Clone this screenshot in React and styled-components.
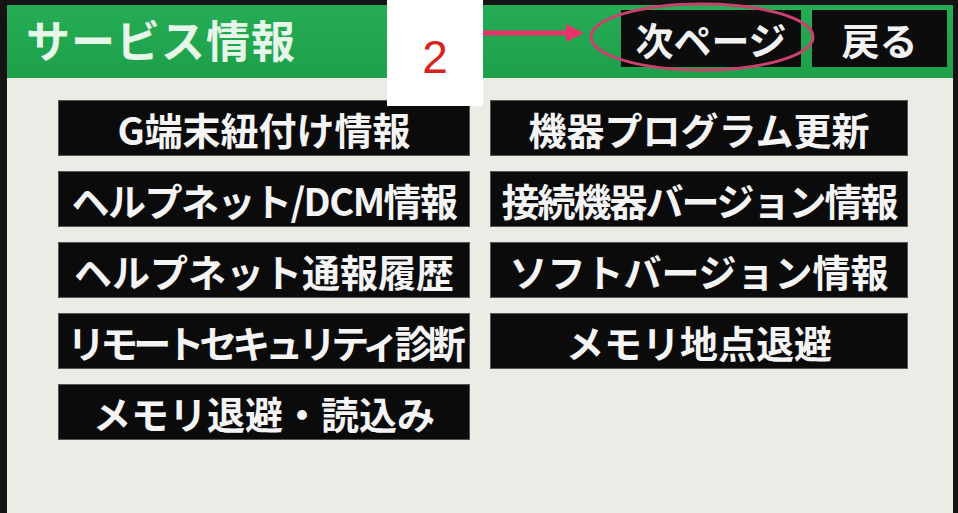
import React from 'react';
import styled, { createGlobalStyle } from 'styled-components';

const GlobalStyle = createGlobalStyle`
  html, body {
    margin: 0;
    padding: 0;
    background: #141414;
  }
  body {
    font-family: "Noto Sans CJK JP", "Noto Sans", sans-serif;
  }
`;

const Frame = styled.div`
  position: relative;
  width: 958px;
  height: 513px;
  padding: 5px 5px 0 7px;
  box-sizing: border-box;
  overflow: hidden;
  background: #141414;
`;

const Screen = styled.div`
  display: flex;
  flex-direction: column;
  height: 100%;
  background: #ecebe6;
`;

const Header = styled.div`
  display: flex;
  align-items: center;
  justify-content: space-between;
  height: 73px;
  padding: 0 6px 6px 19px;
  background: linear-gradient(#25ad55, #1e9f4a);
  box-sizing: border-box;
`;

const Title = styled.h1`
  margin: 0;
  font-size: 44px;
  line-height: 1;
  font-weight: 700;
  color: #e6f6e9;
  letter-spacing: 1px;
`;

const Nav = styled.div`
  display: flex;
  gap: 11px;
`;

const NavButton = styled.div`
  display: flex;
  align-items: center;
  justify-content: center;
  width: ${p => p.$w}px;
  height: 57px;
  background: #0c0c0c;
  color: #f2f2f2;
  font-size: 38px;
  font-weight: 700;
`;

const Grid = styled.div`
  display: grid;
  grid-template-columns: 412px 418px;
  grid-auto-rows: 56px;
  column-gap: 20px;
  row-gap: 15px;
  padding: 22px 0 0 51px;
`;

const MenuButton = styled.div`
  display: flex;
  align-items: center;
  justify-content: center;
  background: #0b0b0b;
  border: 1px solid #55585a;
  color: #f4f4f4;
  font-size: 38px;
  font-weight: 700;
  letter-spacing: ${p => p.$ls || 0}px;
  white-space: nowrap;
  overflow: hidden;
  box-sizing: border-box;
`;

const NoteBox = styled.div`
  position: absolute;
  left: 387px;
  top: 0;
  width: 96px;
  height: 106px;
  background: #ffffff;
  display: flex;
  align-items: center;
  justify-content: center;
  padding-top: 8px;
  box-sizing: border-box;
  color: #d8231c;
  font-family: "Liberation Sans", Arial, sans-serif;
  font-size: 46px;
`;

const Marks = styled.svg`
  position: absolute;
  left: 0;
  top: 0;
  pointer-events: none;
`;

const left = [
  { t: 'G端末紐付け情報' },
  { t: 'ヘルプネット/DCM情報', ls: -1.5 },
  { t: 'ヘルプネット通報履歴' },
  { t: 'リモートセキュリティ診断', ls: -5 },
  { t: 'メモリ退避・読込み' },
];

const right = [
  { t: '機器プログラム更新' },
  { t: '接続機器バージョン情報', ls: -2 },
  { t: 'ソフトバージョン情報' },
  { t: 'メモリ地点退避' },
];

export default function App() {
  const cells = [];
  for (let i = 0; i < left.length; i++) {
    cells.push(<MenuButton key={'l' + i} $ls={left[i].ls}>{left[i].t}</MenuButton>);
    if (right[i]) cells.push(<MenuButton key={'r' + i} $ls={right[i].ls}>{right[i].t}</MenuButton>);
  }
  return (
    <>
      <GlobalStyle />
      <Frame>
        <Screen>
          <Header>
            <Title>サービス情報</Title>
            <Nav>
              <NavButton $w={180}>次ページ</NavButton>
              <NavButton $w={135}>戻る</NavButton>
            </Nav>
          </Header>
          <Grid>{cells}</Grid>
        </Screen>
        <NoteBox>2</NoteBox>
        <Marks width="958" height="120" viewBox="0 0 958 120">
          <line x1="483" y1="33" x2="568" y2="33" stroke="#e7336a" strokeWidth="5" />
          <polygon points="566,24 584,33 566,42" fill="#e7336a" />
          <ellipse cx="702" cy="37" rx="111" ry="33" fill="none" stroke="#c9416c" strokeWidth="3" />
        </Marks>
      </Frame>
    </>
  );
}
